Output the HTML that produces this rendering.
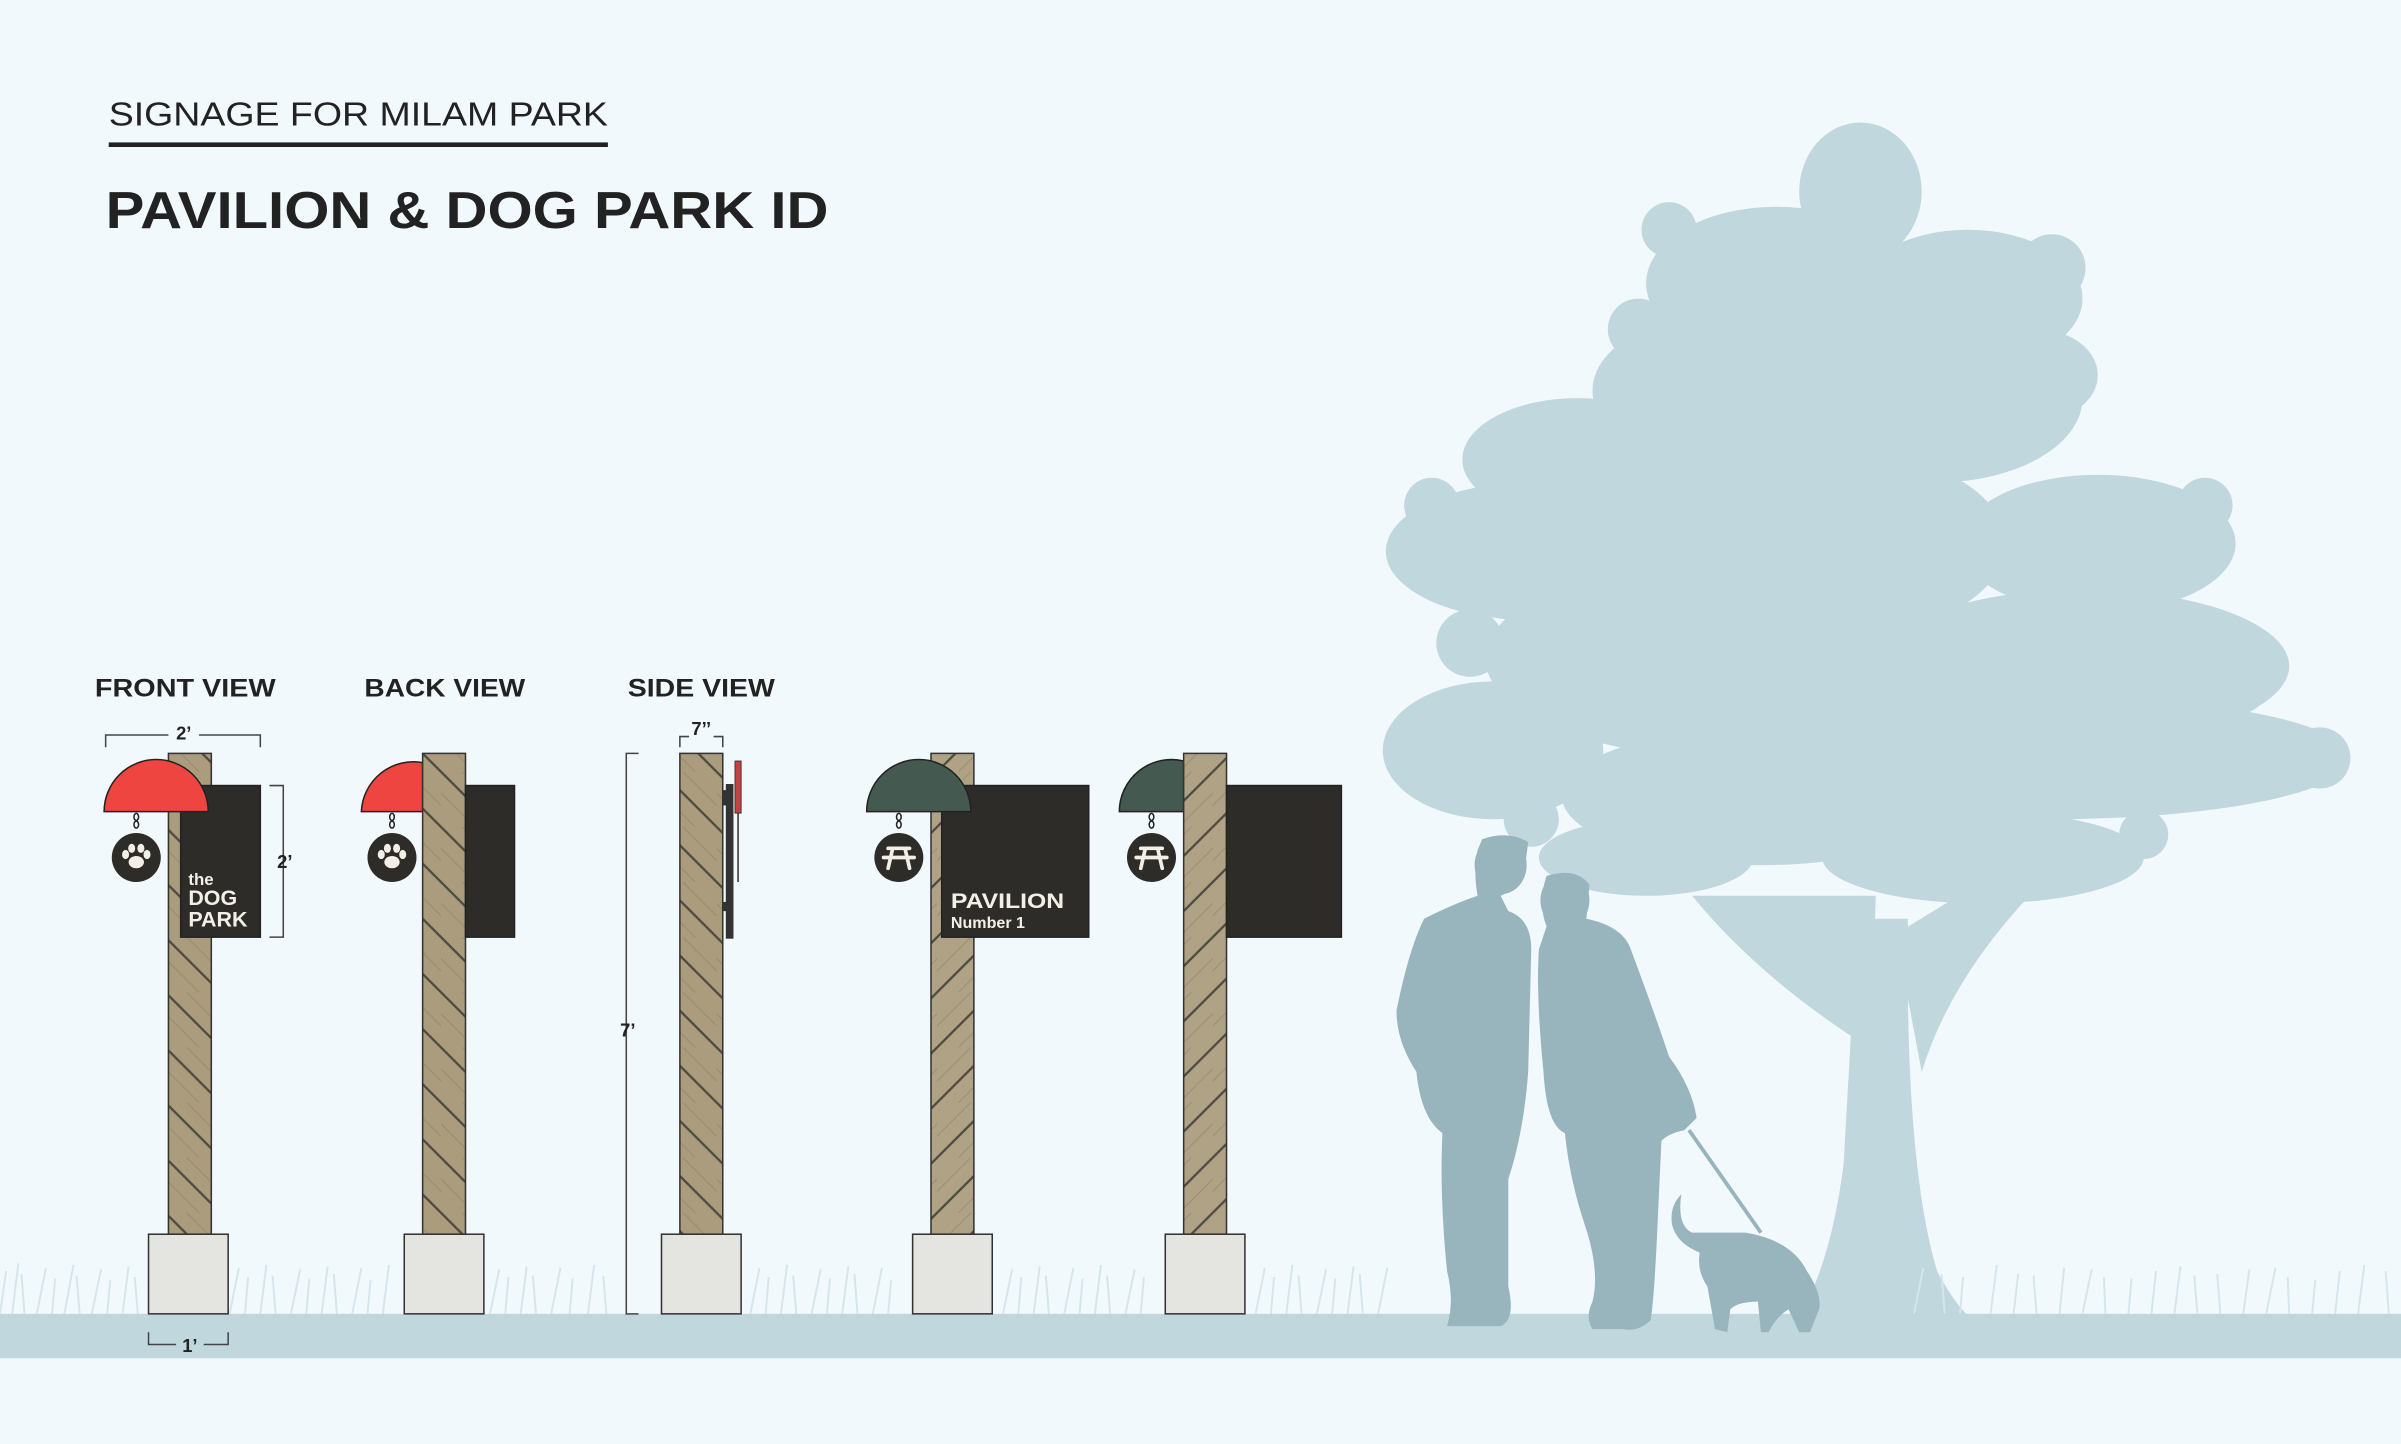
<!DOCTYPE html>
<html><head><meta charset="utf-8"><style>html,body{margin:0;padding:0;background:#f2f9fc;overflow:hidden}svg{display:block}</style></head>
<body>
<svg width="2401" height="1444" viewBox="0 0 1568 943" preserveAspectRatio="none" xmlns="http://www.w3.org/2000/svg" font-family="Liberation Sans, sans-serif">
<defs>
<pattern id="w1" patternUnits="userSpaceOnUse" width="36" height="36">
<rect width="36" height="36" fill="#aa9c7d"/>
<path d="M-2,-2 L38,38 M-2,34 L2,38 M34,-2 L38,2" stroke="#4e4a40" stroke-width="1.5"/>
<path d="M-2,12 L24,38 M12,-2 L38,24" stroke="#978a6c" stroke-width="0.6"/>
</pattern>
<pattern id="w2" patternUnits="userSpaceOnUse" width="36" height="36">
<rect width="36" height="36" fill="#b0a385"/>
<path d="M-2,38 L38,-2 M-2,2 L2,-2 M34,38 L38,34" stroke="#4e4a40" stroke-width="1.5"/>
<path d="M-2,24 L24,-2 M12,38 L38,12" stroke="#9a8c6e" stroke-width="0.6"/>
</pattern>
<g id="paw"><ellipse cx="0" cy="3" rx="5" ry="4" fill="#f4efe6"/><ellipse cx="-7" cy="-2" rx="2.3" ry="3" fill="#f4efe6"/><ellipse cx="-3" cy="-6" rx="2.3" ry="3" fill="#f4efe6"/><ellipse cx="3" cy="-6" rx="2.3" ry="3" fill="#f4efe6"/><ellipse cx="7" cy="-2" rx="2.3" ry="3" fill="#f4efe6"/></g>
<g id="bench" stroke="#f4efe6" stroke-width="2.4" fill="none" stroke-linecap="round"><path d="M-7,-6 H7 M-10,0 H10 M-4,-6 L-7,7 M4,-6 L7,7"/></g>
<g id="chain" stroke="#222" stroke-width="1" fill="none"><ellipse cx="0" cy="3.5" rx="1.5" ry="2.3"/><ellipse cx="0" cy="8.5" rx="1.5" ry="2.3"/></g>
</defs>
<rect width="1568" height="943" fill="#f2f9fc"/>

<!-- tree -->
<g fill="#c1d7de">
<ellipse cx="1215" cy="125" rx="40" ry="45"/>
<ellipse cx="1160" cy="185" rx="85" ry="50"/><ellipse cx="1285" cy="195" rx="75" ry="45"/>
<ellipse cx="1125" cy="255" rx="85" ry="50"/><ellipse cx="1265" cy="260" rx="95" ry="55"/><ellipse cx="1330" cy="245" rx="40" ry="30"/>
<ellipse cx="1030" cy="300" rx="75" ry="40"/>
<ellipse cx="1000" cy="360" rx="95" ry="45"/><ellipse cx="1180" cy="355" rx="130" ry="65"/><ellipse cx="1370" cy="355" rx="90" ry="45"/>
<ellipse cx="1130" cy="430" rx="160" ry="65"/><ellipse cx="1360" cy="435" rx="135" ry="50"/>
<ellipse cx="975" cy="490" rx="72" ry="45"/><ellipse cx="1340" cy="495" rx="195" ry="40"/><ellipse cx="1150" cy="520" rx="130" ry="45"/>
<ellipse cx="1075" cy="560" rx="70" ry="25"/><ellipse cx="1295" cy="560" rx="105" ry="30"/>
<circle cx="935" cy="330" r="18"/><circle cx="920" cy="495" r="16"/><circle cx="1515" cy="495" r="20"/><circle cx="1440" cy="330" r="18"/>
<circle cx="1090" cy="150" r="18"/><circle cx="1340" cy="175" r="22"/><circle cx="1070" cy="215" r="20"/><circle cx="1460" cy="445" r="22"/>
<circle cx="960" cy="420" r="22"/><circle cx="1400" cy="545" r="16"/><circle cx="1000" cy="535" r="18"/>
<path d="M1105,585 Q1150,640 1222,685 L1225,585 Z"/>
<path d="M1238,610 L1320,560 L1335,575 Q1275,635 1255,700 Z"/>
<path d="M1213,600 L1246,600 Q1244,760 1265,830 Q1280,858 1292,864 L1172,864 Q1195,830 1204,760 Z"/>
</g>
<!-- grass -->
<g stroke="#d4e6ec" stroke-width="1.3">
<path d="M0,858 L4,830 M8,858 L12,825 M16,858 L14,832 M24,858 L30,828 M34,858 L36,835 M42,858 L48,826 M52,858 L50,833 M60,858 L66,829 M70,858 L72,836 M80,858 L84,827 M90,858 L88,834 M150,858 L156,828 M160,858 L162,834 M170,858 L174,826 M180,858 L178,833 M190,858 L196,829 M200,858 L202,835 M210,858 L214,827 M220,858 L218,832 M230,858 L236,828 M240,858 L242,836 M250,858 L254,826 M320,858 L326,829 M330,858 L332,834 M340,858 L344,827 M350,858 L348,833 M360,858 L366,828 M372,858 L374,835 M384,858 L388,826 M396,858 L394,833 M490,858 L496,828 M500,858 L502,834 M510,858 L514,826 M520,858 L518,833 M530,858 L536,829 M540,858 L542,835 M550,858 L554,827 M560,858 L558,832 M570,858 L576,828 M580,858 L582,836 M655,858 L661,829 M665,858 L667,834 M675,858 L679,827 M685,858 L683,833 M695,858 L701,828 M705,858 L707,835 M715,858 L719,826 M725,858 L723,833 M735,858 L741,829 M745,858 L747,834 M820,858 L826,828 M830,858 L832,834 M840,858 L844,826 M850,858 L848,833 M860,858 L866,829 M870,858 L872,835 M880,858 L884,827 M890,858 L888,832 M900,858 L906,828 M1250,858 L1256,828 M1270,858 L1268,832 M1280,858 L1282,834 M1300,858 L1304,826 M1315,858 L1318,832 M1330,858 L1328,833 M1345,858 L1348,828 M1360,858 L1366,829 M1375,858 L1374,834 M1390,858 L1392,835 M1405,858 L1408,830 M1420,858 L1424,827 M1435,858 L1433,833 M1450,858 L1448,832 M1465,858 L1469,829 M1480,858 L1486,828 M1495,858 L1494,834 M1510,858 L1512,836 M1525,858 L1528,830 M1540,858 L1544,826 M1560,858 L1558,830"/>
</g>
<rect x="0" y="858" width="1568" height="29" fill="#c1d7de"/>

<!-- people -->
<g fill="#98b4bc">
<path d="M968,548 Q985,542 998,550 L996,565 Q992,580 980,585 L985,595 Q1000,600 1000,620 L998,700 Q995,740 985,770 L985,840 Q990,862 980,866 L945,866 Q950,850 945,830 Q940,780 942,740 Q928,730 925,700 Q912,680 912,660 Q920,620 930,600 Q950,590 965,585 Q962,570 965,555 Z"/>
<ellipse cx="980" cy="565" rx="17" ry="19"/>
<path d="M1010,572 Q1030,566 1038,578 L1036,600 Q1060,605 1065,620 Q1080,660 1090,690 Q1105,710 1108,730 L1100,738 Q1090,740 1085,745 L1082,810 Q1080,850 1078,862 Q1070,870 1060,868 L1040,868 Q1035,860 1040,850 Q1045,830 1035,800 Q1025,770 1022,740 Q1010,735 1008,700 Q1003,650 1005,620 L1010,605 Q1004,590 1010,572 Z"/>
<ellipse cx="1022" cy="588" rx="16" ry="18"/>
<path d="M1098,780 Q1095,800 1105,805 L1140,805 Q1170,810 1180,830 Q1190,845 1188,855 L1182,870 L1175,870 L1168,855 Q1160,860 1155,870 L1150,870 L1148,850 Q1135,850 1130,855 L1128,870 L1120,868 L1115,840 Q1108,830 1110,818 Q1095,812 1092,800 Q1090,788 1098,780 Z"/>
<path d="M1103,738 L1150,805" stroke="#98b4bc" stroke-width="2.5" fill="none"/>
</g>

<!-- titles -->
<text x="71" y="82" font-size="21.5" fill="#222" textLength="326" lengthAdjust="spacingAndGlyphs">SIGNAGE FOR MILAM PARK</text>
<rect x="71" y="93" width="326" height="3" fill="#222"/>
<text x="69" y="149" font-size="34" fill="#222" font-weight="bold" textLength="472" lengthAdjust="spacingAndGlyphs">PAVILION &amp; DOG PARK ID</text>
<g font-size="16.5" font-weight="bold" fill="#222">
<text x="62" y="455" textLength="118" lengthAdjust="spacingAndGlyphs">FRONT VIEW</text>
<text x="238" y="455" textLength="105" lengthAdjust="spacingAndGlyphs">BACK VIEW</text>
<text x="410" y="455" textLength="96" lengthAdjust="spacingAndGlyphs">SIDE VIEW</text>
</g>

<!-- dims -->
<g stroke="#444" stroke-width="1" fill="none">
<path d="M69,488 V480 H110 M130,480 H170 V488"/>
<path d="M176,513 H185 V612 H176"/>
<path d="M97,870 V878 H115 M133,878 H149 V870"/>
<path d="M444,488 V481 H450 M466,481 H472 V488"/>
<path d="M417,492 H409 V858 H417"/>
</g>
<g font-size="12" font-weight="bold" fill="#222" text-anchor="middle">
<text x="120" y="483">2’</text><text x="186" y="567">2’</text><text x="124" y="883">1’</text><text x="458" y="480">7’’</text><text x="410" y="677">7’</text>
</g>

<!-- FRONT -->
<rect x="110" y="492" width="28" height="314" fill="url(#w1)" stroke="#333" stroke-width="1"/>
<rect x="118" y="513" width="52" height="99" fill="#2e2c29" stroke="#222"/>
<path d="M68,530 A34,34 0 0 1 136,530 Z" fill="#ee4540" stroke="#222" stroke-width="1"/>
<use href="#chain" x="89" y="530"/>
<circle cx="89" cy="560" r="16" fill="#2e2c29"/><use href="#paw" x="89" y="560"/>
<g fill="#f4efe6" font-weight="bold"><text x="123" y="578" font-size="11">the</text><text x="123" y="591" font-size="14">DOG</text><text x="123" y="605" font-size="14">PARK</text></g>
<rect x="97" y="806" width="52" height="52" fill="#e4e4e1" stroke="#333"/>

<!-- BACK -->
<path d="M236,530 A34,34 0 0 1 276,498 L276,530 Z" fill="#ee4540" stroke="#222" stroke-width="1"/>
<rect x="276" y="492" width="28" height="314" fill="url(#w1)" stroke="#333"/>
<rect x="304" y="513" width="32" height="99" fill="#2e2c29" stroke="#222"/>
<use href="#chain" x="256" y="530"/>
<circle cx="256" cy="560" r="16" fill="#2e2c29"/><use href="#paw" x="256" y="560"/>
<rect x="264" y="806" width="52" height="52" fill="#e4e4e1" stroke="#333"/>

<!-- SIDE -->
<rect x="444" y="492" width="28" height="314" fill="url(#w1)" stroke="#333"/>
<rect x="472" y="516" width="5" height="10" fill="#333"/><rect x="472" y="589" width="5" height="6" fill="#333"/>
<rect x="474" y="512" width="5" height="101" fill="#333"/>
<rect x="480" y="497" width="4" height="34" fill="#c84040" stroke="#333" stroke-width="0.6"/>
<line x1="482" y1="531" x2="482" y2="576" stroke="#333" stroke-width="1"/>
<rect x="432" y="806" width="52" height="52" fill="#e4e4e1" stroke="#333"/>

<!-- PAVILION FRONT -->
<rect x="608" y="492" width="28" height="314" fill="url(#w2)" stroke="#333"/>
<rect x="615" y="513" width="96" height="99" fill="#2e2c29" stroke="#222"/>
<path d="M566,530 A34,34 0 0 1 634,530 Z" fill="#44594f" stroke="#222" stroke-width="1"/>
<use href="#chain" x="587" y="530"/>
<circle cx="587" cy="560" r="16" fill="#2e2c29"/><use href="#bench" x="587" y="560"/>
<g fill="#f4efe6" font-weight="bold"><text x="621" y="593" font-size="14" textLength="74" lengthAdjust="spacingAndGlyphs">PAVILION</text><text x="621" y="606" font-size="10.5">Number 1</text></g>
<rect x="596" y="806" width="52" height="52" fill="#e4e4e1" stroke="#333"/>

<!-- PAVILION BACK -->
<path d="M731,530 A34,34 0 0 1 773,497 L773,530 Z" fill="#44594f" stroke="#222" stroke-width="1"/>
<rect x="773" y="492" width="28" height="314" fill="url(#w2)" stroke="#333"/>
<rect x="801" y="513" width="75" height="99" fill="#2e2c29" stroke="#222"/>
<use href="#chain" x="752" y="530"/>
<circle cx="752" cy="560" r="16" fill="#2e2c29"/><use href="#bench" x="752" y="560"/>
<rect x="761" y="806" width="52" height="52" fill="#e4e4e1" stroke="#333"/>
</svg>
</body></html>
